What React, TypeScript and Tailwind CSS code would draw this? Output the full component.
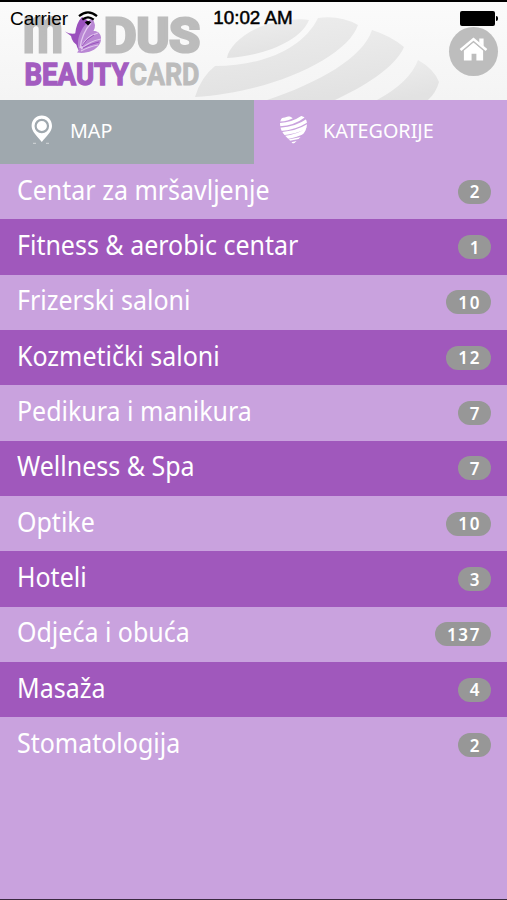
import clsx from 'clsx'

const categories = [
    { name: 'Centar za mršavljenje', count: 2 },
    { name: 'Fitness & aerobic centar', count: 1 },
    { name: 'Frizerski saloni', count: 10 },
    { name: 'Kozmetički saloni', count: 12 },
    { name: 'Pedikura i manikura', count: 7 },
    { name: 'Wellness & Spa', count: 7 },
    { name: 'Optike', count: 10 },
    { name: 'Hoteli', count: 3 },
    { name: 'Odjeća i obuća', count: 137 },
    { name: 'Masaža', count: 4 },
    { name: 'Stomatologija', count: 2 },
]

const HeaderArt = () => (
    <svg className="absolute inset-0" width="507" height="98" viewBox="0 2 507 98">
        <defs>
            <linearGradient id="swoosh" x1="0" y1="0" x2="0.3" y2="1">
                <stop offset="0" stopColor="#eeeeee" />
                <stop offset="1" stopColor="#e2e2e2" />
            </linearGradient>
        </defs>
        <g fill="url(#swoosh)">
            <path d="M227 58C229 44 252 25 282 21Q300 18 309 20C300 42 262 56 227 58Z" />
            <path d="M195 97Q201 77 215 66C262 66 303 49 318 18Q340 15 358 25C347 58 270 93 195 97Z" />
            <path d="M267 100C318 83 363 58 372 30Q391 36 404 47C395 68 363 87 335 100Z" />
            <path d="M377 100Q410 82 418 60Q434 69 439 82Q436 93 428 100Z" />
        </g>
    </svg>
)

const Logo = () => (
    <svg className="absolute left-0 top-0 overflow-visible" width="210" height="98" viewBox="0 2 210 98" fontFamily="Roboto, sans-serif" fontWeight="700">
        <g fill="#bcbcbc" stroke="#bcbcbc">
            <text x="23" y="51.8" fontSize="65" strokeWidth="2.8" textLength="40" lengthAdjust="spacingAndGlyphs">m</text>
            <text x="104" y="51.5" fontSize="49" strokeWidth="3.2" textLength="96" lengthAdjust="spacingAndGlyphs">DUS</text>
        </g>
        <text x="24.5" y="84.5" fontSize="31.5" fill="#a35cc0" stroke="#a35cc0" strokeWidth="1.4" textLength="104" lengthAdjust="spacingAndGlyphs">BEAUTY</text>
        <text x="129.5" y="84.5" fontSize="31.5" fill="#bcbcbc" stroke="#bcbcbc" strokeWidth="0.9" textLength="70" lengthAdjust="spacingAndGlyphs">CARD</text>
        {/* butterfly */}
        <path d="M79 51C73 41 74 25 82 17Q90 20 91 28L82 43Z" fill="#9a50bd" />
        <path d="M65 31.5Q71 35 77 33L79 46Q72 43 71 36Z" fill="#9a50bd" />
        <path d="M79 50C75 37 84 24 92 18Q97 25 93.5 31C103 31 102 42 99 45C95 51 86 54 77 52.5Z" fill="#b987d4" />
        <path d="M80 48Q82 33 91 23M81 48Q86 36 98 33M81 49Q90 41 101 39M81 51Q88 47 98 45" fill="none" stroke="#e3c9ef" strokeWidth="1.2" />
        <path d="M82 46Q86 39 94 35M83 48Q90 44 99 42" fill="none" stroke="#9a50bd" strokeWidth="1" />
    </svg>
)

const StatusBar = () => (
    <div className="relative flex h-[32px] items-center justify-between pl-[10px] pr-[9px] text-black">
        <div className="flex w-[180px] items-center gap-[10px]">
            <span className="text-[19px] leading-none">Carrier</span>
            <svg width="20" height="15" viewBox="0 0 20 15" fill="none" stroke="#000" strokeWidth="2.2">
                <path d="M1 5.2Q10 -2.4 19 5.2M4.3 8.7Q10 4 15.7 8.7" />
                <path d="M6.8 11.2Q10 8.6 13.2 11.2L10 14.6Z" fill="#000" stroke="none" />
            </svg>
        </div>
        <span className="text-[18.8px] leading-none whitespace-nowrap [-webkit-text-stroke:0.5px_black]">10:02 AM</span>
        <div className="flex w-[182px] items-center justify-end">
            <div className="h-[15px] w-[35px] rounded-[2px] bg-black" />
            <div className="ml-px h-[5px] w-[2px] rounded-r bg-black" />
        </div>
    </div>
)

const HomeButton = () => (
    <button className="absolute left-[449px] top-[25px] flex h-[49px] w-[49px] items-center justify-center rounded-full bg-[#bdbdbd] pb-[5px]">
        <svg width="29" height="25" viewBox="0 0 30 26">
            <path d="M5 14L15 5.5L25 14V24.5H18V17.5H13V24.5H5Z" fill="#fff" />
            <path d="M1.7 14L15 2.7L28.3 14" fill="none" stroke="#bdbdbd" strokeWidth="4.4" />
            <path d="M21 1.5H25.5V10L21 6Z" fill="#fff" />
            <path d="M1.5 13.5L15 2.2L28.5 13.5" fill="none" stroke="#fff" strokeWidth="2.6" />
        </svg>
    </button>
)

const Tabs = () => (
    <div className="flex h-[64px] text-[20.5px] leading-none text-white">
        <div className="flex w-[254px] items-center bg-[#9fa8ae] pb-[5px] pl-[31px]">
            <svg width="22" height="29" viewBox="0 0 22 29">
                <path d="M10.8 0.5C5 0.5 0.6 5 0.6 11C0.6 16.5 6 21 10.8 27C15.6 21 21 16.5 21 11C21 5 16.6 0.5 10.8 0.5Z" fill="#fff" />
                <circle cx="10.8" cy="11" r="6.2" fill="none" stroke="#9fa8ae" strokeWidth="2.2" />
                <path d="M2 28.3H5M15 28.3H18" stroke="#dfe3e5" strokeWidth="0.8" />
            </svg>
            <span className="ml-[17px] mt-px origin-left scale-x-[0.96]">MAP</span>
        </div>
        <div className="flex flex-1 items-center pb-[5px] pl-[25px]">
            <svg width="29" height="30" viewBox="0 0 29 30">
                <defs>
                    <clipPath id="heart">
                        <path d="M14.5 29.5C11 24 1 19 1 9C1 0 10 -1 14.5 4C19 -1 28 0 28 9C28 19 18 24 14.5 29.5Z" />
                    </clipPath>
                </defs>
                <g clipPath="url(#heart)" fill="none" stroke="#fff" strokeWidth="3.3">
                    <path d="M-1 5Q8 5 16 0M-1 9.7Q14 9.5 25 1M0 14.4Q17 13.5 29 5M2 18.8Q19 17.5 30 10M5 22.6Q18 21.5 28 15" />
                    <path d="M7 25.7L22 22.8M10 28.5L19 26.5" strokeWidth="1.6" />
                </g>
            </svg>
            <span className="ml-[15px] mt-px origin-left scale-x-[0.965]">KATEGORIJE</span>
        </div>
    </div>
)

const App = () => {
    return (
        <div className="flex h-[900px] w-[507px] flex-col overflow-hidden border-b border-t-2 border-b-[#3a2a40] border-t-black bg-[#c9a2de] font-['Noto_Sans',sans-serif]">
            <header className="relative h-[98px] shrink-0 bg-linear-to-b from-[#fbfbfb] to-[#f4f4f4] font-['Liberation_Sans',sans-serif]">
                <HeaderArt />
                <Logo />
                <HomeButton />
                <StatusBar />
            </header>
            <Tabs />
            <ul>
                {categories.map((category, index) => (
                    <li
                        key={category.name}
                        className={clsx(
                            'flex h-[55.35px] items-center justify-between pl-[17px] pr-[16px] text-white',
                            index % 2 === 1 && 'bg-[#a058bc]'
                        )}
                    >
                        <span className="origin-left scale-x-[0.925] pb-[5px] text-[27px] leading-none whitespace-nowrap">{category.name}</span>
                        <span className="flex h-[24px] min-w-[33px] items-center justify-center rounded-full bg-[#979797] pl-[12px] pr-[10px] text-[17px] font-semibold leading-none tracking-[1.6px]">{category.count}</span>
                    </li>
                ))}
            </ul>
        </div>
    )
}

export default App
